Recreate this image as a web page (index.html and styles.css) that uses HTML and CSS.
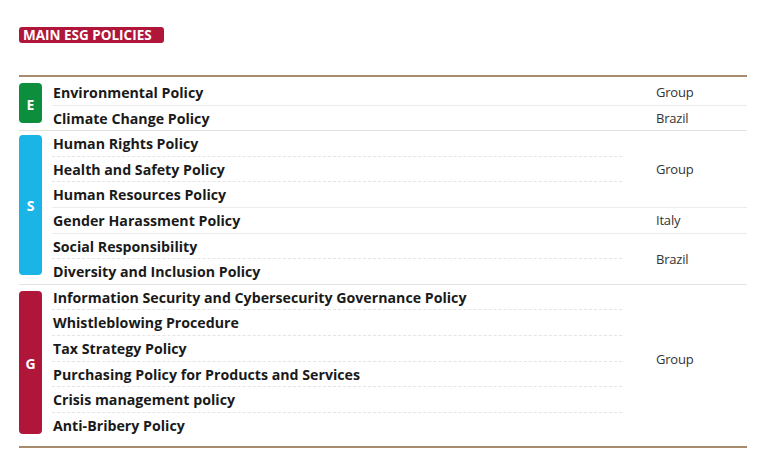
FILE: index.html
```html
<!DOCTYPE html>
<html lang="en">
<head>
<meta charset="utf-8">
<title>Main ESG Policies</title>
<link rel="stylesheet" href="styles.css">
</head>
<body>
<div class="page">
  <div class="badge">MAIN ESG POLICIES</div>
  <div class="table">
    <div class="section sec-e">
      <div class="tag tag-e">E</div>
      <div class="groups">
        <div class="group">
          <div class="names"><div class="name first-row">Environmental Policy</div></div>
          <div class="scope scope-first">Group</div>
        </div>
        <div class="group">
          <div class="names"><div class="name">Climate Change Policy</div></div>
          <div class="scope">Brazil</div>
        </div>
      </div>
    </div>
    <div class="section sec-s">
      <div class="tag tag-s">S</div>
      <div class="groups">
        <div class="group">
          <div class="names">
            <div class="name">Human Rights Policy</div>
            <div class="name">Health and Safety Policy</div>
            <div class="name">Human Resources Policy</div>
          </div>
          <div class="scope">Group</div>
        </div>
        <div class="group">
          <div class="names"><div class="name">Gender Harassment Policy</div></div>
          <div class="scope">Italy</div>
        </div>
        <div class="group">
          <div class="names">
            <div class="name">Social Responsibility</div>
            <div class="name">Diversity and Inclusion Policy</div>
          </div>
          <div class="scope">Brazil</div>
        </div>
      </div>
    </div>
    <div class="section sec-g">
      <div class="tag tag-g">G</div>
      <div class="groups">
        <div class="group">
          <div class="names">
            <div class="name">Information Security and Cybersecurity Governance Policy</div>
            <div class="name">Whistleblowing Procedure</div>
            <div class="name">Tax Strategy Policy</div>
            <div class="name">Purchasing Policy for Products and Services</div>
            <div class="name">Crisis management policy</div>
            <div class="name">Anti-Bribery Policy</div>
          </div>
          <div class="scope">Group</div>
        </div>
      </div>
    </div>
  </div>
</div>
</body>
</html>
```

FILE: styles.css
```css
html, body {
  margin: 0;
  padding: 0;
  background: #ffffff;
}

.page {
  padding: 27px 0 0 19px;
  font-family: "Open Sans", Lato, sans-serif;
  color: #1a1a1a;
}

.badge {
  box-sizing: border-box;
  width: 145px;
  height: 16px;
  line-height: 16px;
  padding-left: 4px;
  background: #b0163a;
  color: #ffffff;
  font-weight: 700;
  font-size: 13.5px;
  border-radius: 3px;
  white-space: nowrap;
  overflow: hidden;
}

.table {
  width: 728px;
  margin-top: 32px;
  border-top: 2px solid #a88a6f;
  border-bottom: 2px solid #a88a6f;
}

.section {
  display: flex;
  border-top: 1px solid #e2e2e2;
}

.section:first-child {
  border-top: none;
}

.tag {
  width: 23px;
  flex: none;
  border-radius: 4px;
  margin-right: 10px;
  display: flex;
  align-items: center;
  justify-content: center;
  padding-top: 2px;
  box-sizing: border-box;
  color: #ffffff;
  font-weight: 700;
  font-size: 14px;
}

.tag-e { background: #0c8e3d; }
.tag-s { background: #1bb4e7; }
.tag-g { background: #b0163a; }

.sec-e .tag { margin-top: 6px; margin-bottom: 7px; }
.sec-s .tag { margin-top: 4px; margin-bottom: 9px; }
.sec-g .tag { margin-top: 6px; margin-bottom: 12px; }

.sec-g .groups { padding-bottom: 9px; }
.sec-g .scope { padding-bottom: 4px; }

.groups {
  flex: 1;
  display: flex;
  flex-direction: column;
}

.group {
  display: flex;
  border-top: 1px solid #ececec;
}

.group:first-child {
  border-top: none;
}

.names {
  width: 570px;
  flex: none;
}

.name {
  height: 23.6px;
  line-height: 24.6px;
  padding-top: 1px;
  padding-left: 1px;
  font-weight: 700;
  font-size: 14.2px;
  color: #1a1a1a;
  border-top: 1px dashed #e4e4e4;
  white-space: nowrap;
}

.name:first-child {
  border-top: none;
}

.name.first-row {
  padding-top: 4px;
}

.scope {
  flex: 1;
  display: flex;
  align-items: center;
  padding-left: 34px;
  font-size: 13px;
  letter-spacing: -0.2px;
  color: #333333;
}

.scope-first {
  padding-top: 3px;
}
```
